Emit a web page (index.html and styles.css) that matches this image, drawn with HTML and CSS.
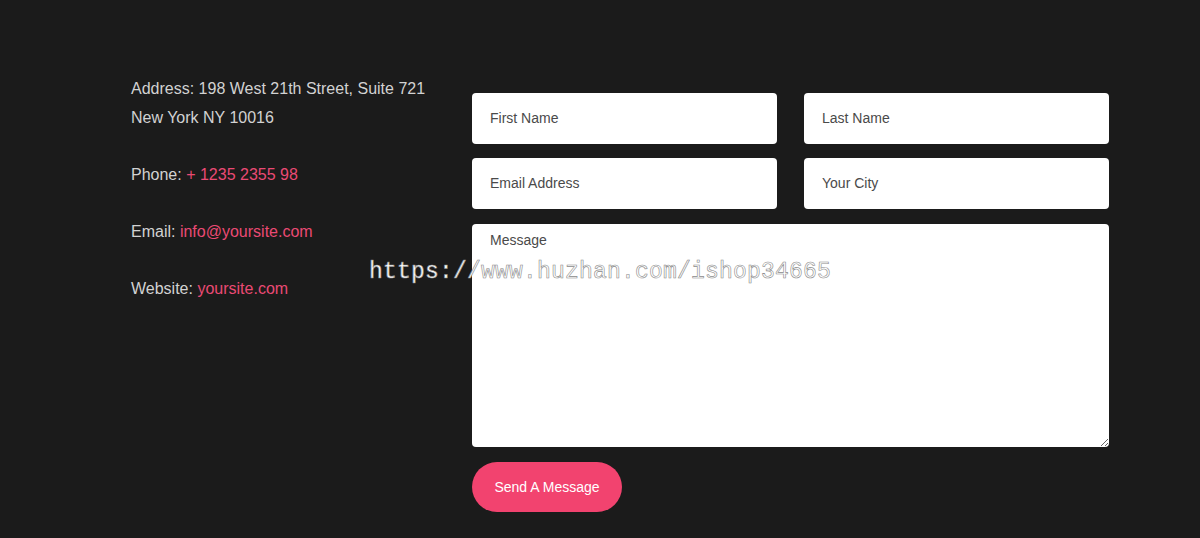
FILE: index.html
```html
<!DOCTYPE html>
<html lang="en">
<head>
<meta charset="utf-8">
<title>Contact</title>
<link rel="stylesheet" href="styles.css">
</head>
<body>
<section class="contact">
  <div class="info">
    <p>Address: 198 West 21th Street, Suite 721<br>New York NY 10016</p>
    <p>Phone: <a href="#">+ 1235 2355 98</a></p>
    <p>Email: <a href="#">info@yoursite.com</a></p>
    <p>Website: <a href="#">yoursite.com</a></p>
  </div>
  <form class="form">
    <div class="row">
      <input class="field" type="text" placeholder="First Name">
      <input class="field" type="text" placeholder="Last Name">
    </div>
    <div class="row">
      <input class="field" type="text" placeholder="Email Address">
      <input class="field" type="text" placeholder="Your City">
    </div>
    <textarea class="message" placeholder="Message"></textarea>
    <button class="send" type="button">Send A Message</button>
  </form>
  <div class="watermark">https://www.huzhan.com/ishop34665</div>
</section>
</body>
</html>
```

FILE: styles.css
```css
html, body {
  margin: 0;
  padding: 0;
  background: #1b1b1b;
  height: 100%;
}
body {
  font-family: "Liberation Sans", Arial, sans-serif;
  overflow: hidden;
}
.contact {
  position: relative;
  display: flex;
  padding: 74px 0 0 131px;
}
.info {
  width: 341px;
  flex: none;
  color: #d2d2d2;
  font-size: 16px;
  line-height: 29px;
}
.info p {
  margin: 0 0 28px 0;
  white-space: nowrap;
}
.info a {
  color: #ea4a74;
  text-decoration: none;
}
.form {
  width: 637px;
  margin-top: 19px;
  display: flex;
  flex-direction: column;
}
.row {
  display: flex;
  gap: 27px;
  margin-bottom: 14px;
}
.field {
  width: 305px;
  height: 51px;
  box-sizing: border-box;
  border: none;
  border-radius: 4px;
  background: #fff;
  padding: 0 18px 2px 18px;
  font-family: "Liberation Sans", Arial, sans-serif;
  font-size: 14px;
  color: #333;
  outline: none;
}
.field::placeholder,
.message::placeholder {
  color: #4a4a4a;
  opacity: 1;
}
.message {
  width: 637px;
  height: 223px;
  box-sizing: border-box;
  border: none;
  border-radius: 4px;
  background: #fff;
  padding: 8px 18px;
  font-family: "Liberation Sans", Arial, sans-serif;
  font-size: 14px;
  line-height: 16px;
  color: #333;
  outline: none;
  margin: 1px 0 0 0;
  display: block;
}
.send {
  margin-top: 15px;
  width: 150px;
  height: 50px;
  border: none;
  border-radius: 25px;
  background: #f2436f;
  color: #fff;
  font-family: "Liberation Sans", Arial, sans-serif;
  font-size: 14px;
  cursor: pointer;
  align-self: flex-start;
}
.watermark {
  position: absolute;
  left: 369px;
  top: 259px;
  font-family: "Liberation Mono", "DejaVu Sans Mono", monospace;
  font-size: 23px;
  letter-spacing: 0.2px;
  color: #fff;
  -webkit-text-stroke: 0.6px #8a8a8a;
  pointer-events: none;
  white-space: nowrap;
}
```
